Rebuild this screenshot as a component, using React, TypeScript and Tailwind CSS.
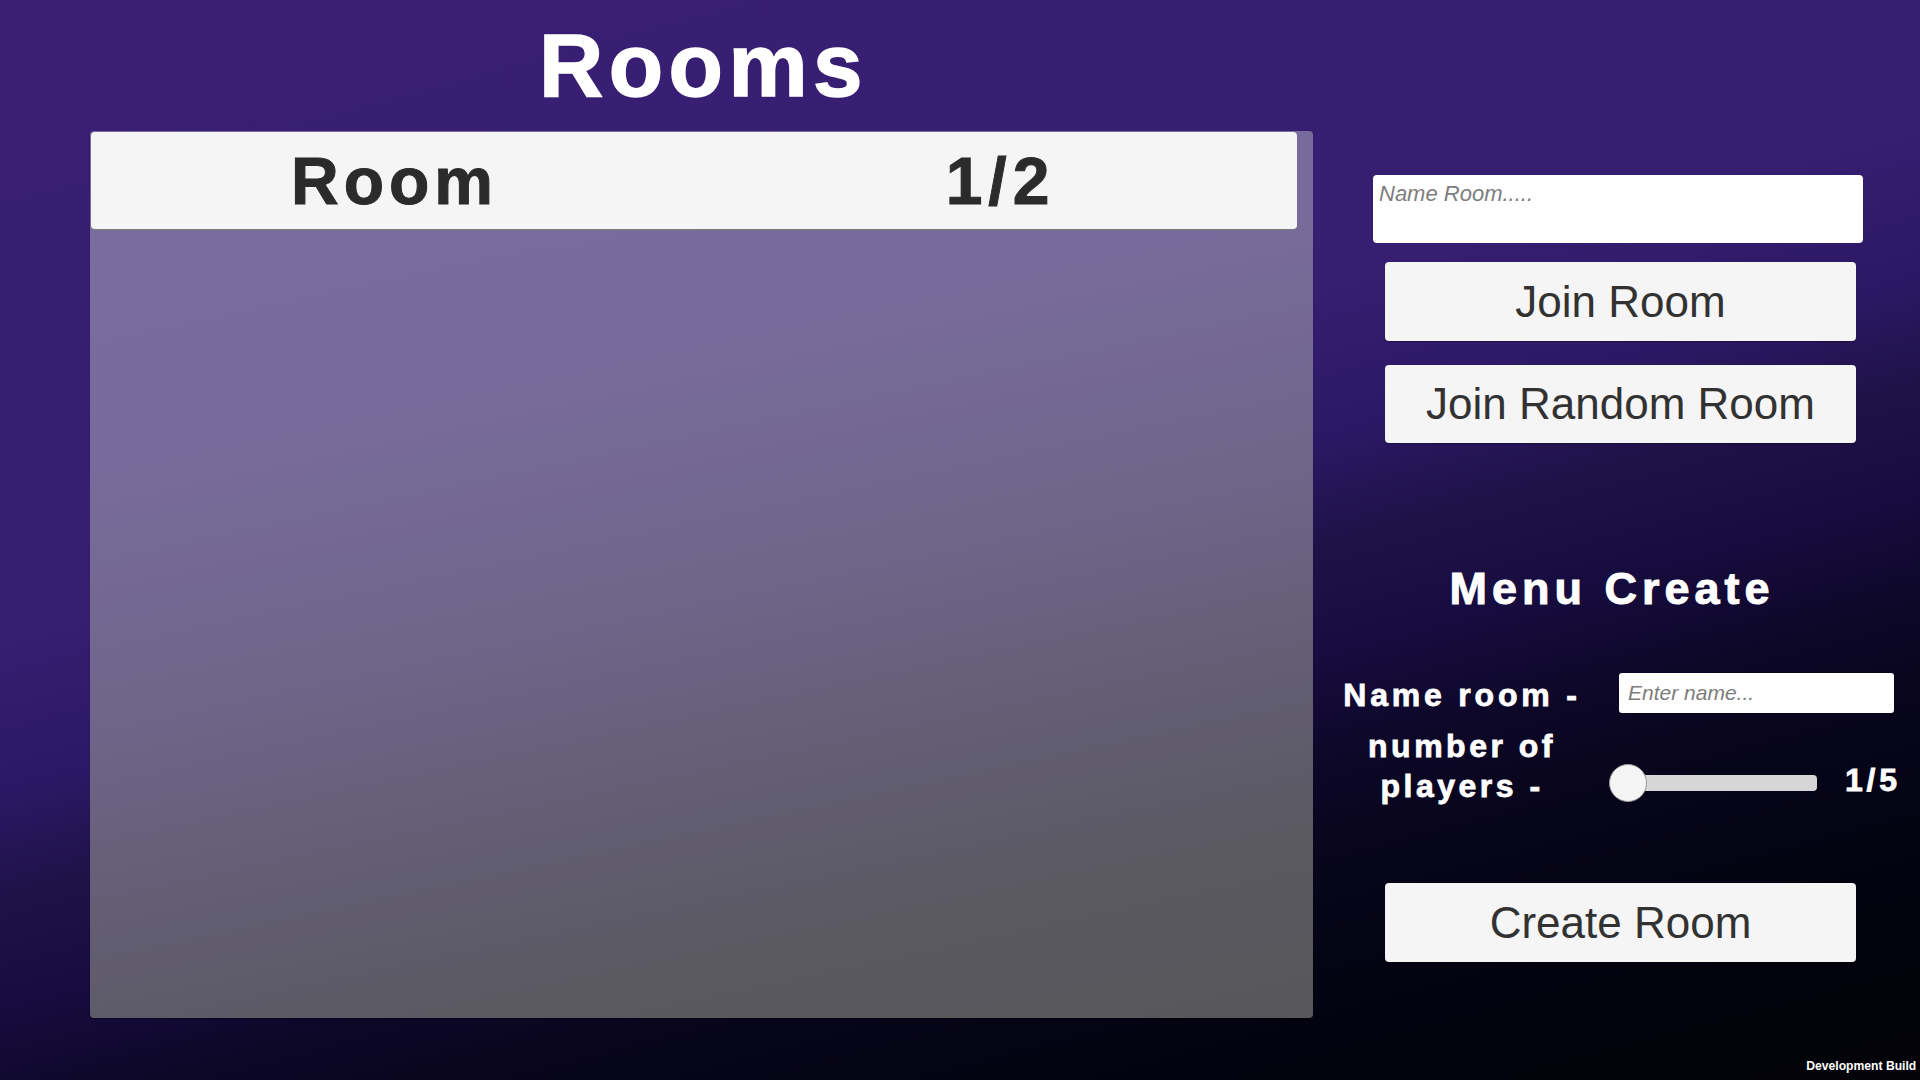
export default function App() {
  return (
    <div className="relative h-[1080px] w-[1920px] overflow-hidden bg-[linear-gradient(165deg,#381f74_0%,#361e70_40%,#2b1864_50%,#1f1249_56%,#170c40_63%,#0d0728_70%,#07051a_77%,#030310_86%,#020207_100%)] font-['Liberation_Sans',Arial,sans-serif]">
      <div className="flex">
        {/* Left column */}
        <div className="ml-[90px] flex w-[1223px] flex-col">
          <h1 className="mt-[21px] pl-[4px] text-center text-[89px] leading-[89px] font-bold tracking-[5.5px] text-white [-webkit-text-stroke:1.5px_#ffffff]">
            Rooms
          </h1>
          <div className="mt-[21px] h-[887px] rounded-[4px] bg-[linear-gradient(168deg,#7a6d9f_0%,#786b9b_30%,#6f6589_52%,#625d72_70%,#5a5960_85%,#57575b_100%)] pt-[1px] pr-[16px] pl-[1px] shadow-[0_1px_1px_rgba(0,0,0,0.35)]">
            <div className="grid h-[97px] grid-cols-2 items-center rounded-[4px] bg-[#f5f5f5] shadow-[0_1px_0_#7c7c7c]">
              <div className="pl-[4px] text-center text-[66px] leading-none font-bold tracking-[5px] text-[#2b2b2b] [-webkit-text-stroke:1px_#2b2b2b]">
                Room
              </div>
              <div className="pl-[10px] text-center text-[66px] leading-none font-bold tracking-[6px] text-[#2b2b2b] [-webkit-text-stroke:1px_#2b2b2b]">
                1/2
              </div>
            </div>
          </div>
        </div>

        {/* Right column */}
        <div className="ml-[17px] flex w-[590px] flex-col">
          <div className="mt-[175px] ml-[43px] h-[68px] w-[490px] rounded-[4px] bg-white pt-[8px] pl-[6px] text-[22px] leading-[22px] italic text-[#7d7d7d]">
            Name Room.....
          </div>
          <button className="mt-[19px] ml-[55px] flex h-[79px] w-[471px] items-center justify-center rounded-[4px] bg-[#f5f5f5] text-[44px] text-[#323232] shadow-[0_1px_1px_rgba(0,0,0,0.3)]">
            Join Room
          </button>
          <button className="mt-[24px] ml-[55px] flex h-[78px] w-[471px] items-center justify-center rounded-[4px] bg-[#f5f5f5] text-[44px] text-[#323232] shadow-[0_1px_1px_rgba(0,0,0,0.3)]">
            Join Random Room
          </button>

          <div className="mt-[123px] w-[564px] text-center text-[45px] leading-[45px] font-bold tracking-[5px] text-white [-webkit-text-stroke:1px_#ffffff]">
            Menu Create
          </div>

          <div className="mt-[62px] flex items-start">
            <div className="mt-[3px] w-[264px] text-center text-[32px] leading-[38px] font-bold tracking-[3.8px] text-white [-webkit-text-stroke:0.8px_#ffffff]">
              Name room -
            </div>
            <div className="ml-[25px] flex h-[40px] w-[275px] items-center rounded-[3px] bg-white pl-[9px] text-[21px] italic text-[#7d7d7d]">
              Enter name...
            </div>
          </div>

          <div className="mt-[12px] flex items-start">
            <div className="w-[264px] text-center text-[32px] leading-[40px] font-bold tracking-[3.5px] text-white [-webkit-text-stroke:0.8px_#ffffff]">
              <div>number of</div>
              <div>players -</div>
            </div>
            <div className="relative mt-[38px] ml-[15px] flex h-[38px] w-[208px] items-center">
              <div className="ml-[6px] h-[16px] w-[202px] rounded-[4px] bg-[#d6d6d6]" />
              <div className="absolute top-0 left-0 h-[38px] w-[38px] rounded-full border border-[#9a9a9a] bg-[#f5f5f5]" />
            </div>
            <div className="mt-[35px] ml-[28px] text-[32px] leading-[38px] font-bold tracking-[3.8px] text-white [-webkit-text-stroke:0.8px_#ffffff]">
              1/5
            </div>
          </div>

          <button className="mt-[77px] ml-[55px] flex h-[79px] w-[471px] items-center justify-center rounded-[4px] bg-[#f5f5f5] text-[44px] text-[#323232] shadow-[0_1px_1px_rgba(0,0,0,0.3)]">
            Create Room
          </button>
        </div>
      </div>

      <div className="absolute right-[4px] bottom-[8px] origin-right scale-x-[0.9] text-[13.5px] leading-none font-bold text-white">
        Development Build
      </div>
    </div>
  );
}
